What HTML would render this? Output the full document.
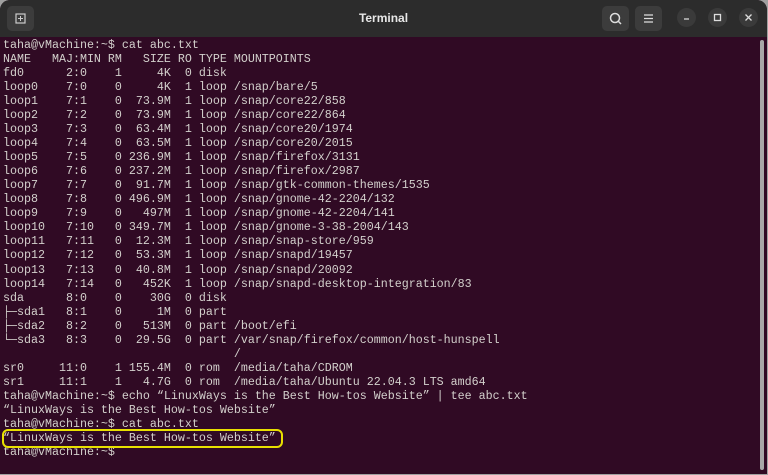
<!DOCTYPE html>
<html><head><meta charset="utf-8"><style>
*{margin:0;padding:0;box-sizing:border-box}
body{width:768px;height:475px;background:#a0a0a0;overflow:hidden;position:relative}
.win{position:absolute;left:0;top:0;width:767px;height:474px;background:#300a24;border-radius:10px 10px 0 0;overflow:hidden}
.tb{position:absolute;left:0;top:0;width:100%;height:37px;background:#2c2c2c}
.title{position:absolute;left:0;right:0;top:11px;text-align:center;color:#e8e8e8;font:bold 12px "Liberation Sans",sans-serif}
.btn{position:absolute;top:6px;width:27px;height:25px;background:#3c3c3c;border-radius:5px}
.cb{position:absolute;top:8px;width:19px;height:19px;border-radius:50%;background:#3a3a3a}
pre{position:absolute;left:3px;top:38px;font:11.67px/14.03px "Liberation Mono",monospace;color:#d3d0cc;letter-spacing:0}
.hl{position:absolute;left:2px;top:429px;width:281px;height:19px;border:2px solid #e8e000;border-radius:6px}
.sb{position:absolute;left:760px;top:40px;width:4px;height:430px;background:#a8a8a8;border-radius:2px}
</style></head><body>
<div class="win">
<div class="tb">
<div class="btn" style="left:7px"><svg width="27" height="25"><rect x="9" y="8" width="9" height="9" fill="none" stroke="#ccc" stroke-width="1.2"/><path d="M13.5 10v5M11 12.5h5" stroke="#ccc"/></svg></div>
<div class="title">Terminal</div>
<div class="btn" style="left:602px"><svg width="27" height="25"><circle cx="13" cy="12" r="4.5" fill="none" stroke="#ddd" stroke-width="1.5"/><path d="M16 15l3 3" stroke="#ddd" stroke-width="1.5"/></svg></div>
<div class="btn" style="left:635px"><svg width="27" height="25"><path d="M9 9h9M9 12.5h9M9 16h9" stroke="#ddd" stroke-width="1.3"/></svg></div>
<div class="cb" style="left:677px"><svg width="19" height="19"><path d="M7 11h5" stroke="#ddd" stroke-width="1.3"/></svg></div>
<div class="cb" style="left:708px"><svg width="19" height="19"><rect x="6.5" y="6.5" width="6" height="6" fill="none" stroke="#ddd" stroke-width="1.3"/></svg></div>
<div class="cb" style="left:739px"><svg width="19" height="19"><path d="M6.5 6.5l6 6M12.5 6.5l-6 6" stroke="#ddd" stroke-width="1.3"/></svg></div>
</div>
<pre>taha@vMachine:~$ cat abc.txt
NAME   MAJ:MIN RM   SIZE RO TYPE MOUNTPOINTS
fd0      2:0    1     4K  0 disk
loop0    7:0    0     4K  1 loop /snap/bare/5
loop1    7:1    0  73.9M  1 loop /snap/core22/858
loop2    7:2    0  73.9M  1 loop /snap/core22/864
loop3    7:3    0  63.4M  1 loop /snap/core20/1974
loop4    7:4    0  63.5M  1 loop /snap/core20/2015
loop5    7:5    0 236.9M  1 loop /snap/firefox/3131
loop6    7:6    0 237.2M  1 loop /snap/firefox/2987
loop7    7:7    0  91.7M  1 loop /snap/gtk-common-themes/1535
loop8    7:8    0 496.9M  1 loop /snap/gnome-42-2204/132
loop9    7:9    0   497M  1 loop /snap/gnome-42-2204/141
loop10   7:10   0 349.7M  1 loop /snap/gnome-3-38-2004/143
loop11   7:11   0  12.3M  1 loop /snap/snap-store/959
loop12   7:12   0  53.3M  1 loop /snap/snapd/19457
loop13   7:13   0  40.8M  1 loop /snap/snapd/20092
loop14   7:14   0   452K  1 loop /snap/snapd-desktop-integration/83
sda      8:0    0    30G  0 disk
├─sda1   8:1    0     1M  0 part
├─sda2   8:2    0   513M  0 part /boot/efi
└─sda3   8:3    0  29.5G  0 part /var/snap/firefox/common/host-hunspell
                                 /
sr0     11:0    1 155.4M  0 rom  /media/taha/CDROM
sr1     11:1    1   4.7G  0 rom  /media/taha/Ubuntu 22.04.3 LTS amd64
taha@vMachine:~$ echo “LinuxWays is the Best How-tos Website” | tee abc.txt
“LinuxWays is the Best How-tos Website”
taha@vMachine:~$ cat abc.txt
“LinuxWays is the Best How-tos Website”
taha@vMachine:~$</pre>
<div class="hl"></div>
<div class="sb"></div>
</div>
</body></html>
